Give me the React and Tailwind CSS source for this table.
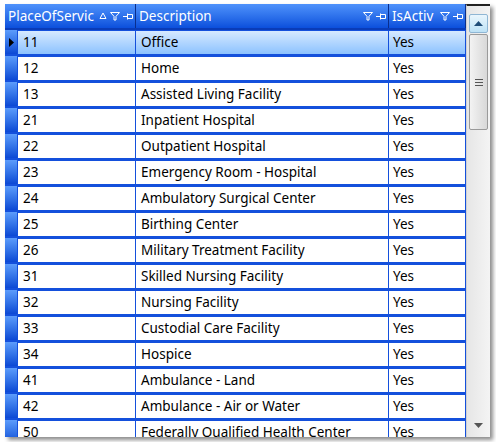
import React from 'react';

const rows = [
  ['11', 'Office', 'Yes'],
  ['12', 'Home', 'Yes'],
  ['13', 'Assisted Living Facility', 'Yes'],
  ['21', 'Inpatient Hospital', 'Yes'],
  ['22', 'Outpatient Hospital', 'Yes'],
  ['23', 'Emergency Room - Hospital', 'Yes'],
  ['24', 'Ambulatory Surgical Center', 'Yes'],
  ['25', 'Birthing Center', 'Yes'],
  ['26', 'Military Treatment Facility', 'Yes'],
  ['31', 'Skilled Nursing Facility', 'Yes'],
  ['32', 'Nursing Facility', 'Yes'],
  ['33', 'Custodial Care Facility', 'Yes'],
  ['34', 'Hospice', 'Yes'],
  ['41', 'Ambulance - Land', 'Yes'],
  ['42', 'Ambulance - Air or Water', 'Yes'],
  ['50', 'Federally Qualified Health Center', 'Yes'],
];

const FilterIcon = () => (
  <svg width="10" height="10" viewBox="0 0 10 10" className="shrink-0">
    <path d="M0.5 1.5 H9.5 L6 5.3 V9 H4 V5.3 Z" fill="none" stroke="white" strokeWidth="1" />
  </svg>
);

const PinIcon = () => (
  <svg width="10" height="10" viewBox="0 0 10 10" className="shrink-0">
    <path d="M0 5.5 H4.5 M4.5 2.5 V8.5 M4.5 3.5 H9.5 V7.5 H4.5" fill="none" stroke="white" strokeWidth="1" />
  </svg>
);

const SortIcon = () => (
  <svg width="8" height="8" viewBox="0 0 8 8" className="shrink-0">
    <path d="M4 1 L7 6.5 H1 Z" fill="none" stroke="white" strokeWidth="1" />
  </svg>
);

const HeaderCell = ({ label, width, sort }) => (
  <div
    className={`${width} h-full flex items-center pl-[3px] pr-[2px] border-r border-[#0a2e8c] overflow-hidden`}
  >
    <span className="flex-1 whitespace-nowrap overflow-hidden text-white text-[13.5px]">{label}</span>
    <div className="flex items-center gap-[3px]">
      {sort && <SortIcon />}
      <FilterIcon />
      <PinIcon />
    </div>
  </div>
);

export default function App() {
  return (
    <div
      className="w-[496px] h-[442px] bg-white pl-[5px] pt-[4px] overflow-hidden"
      style={{ fontFamily: '"Noto Sans", "DejaVu Sans", sans-serif' }}
    >
      <div className="w-[485px] h-[433px] flex shadow-[3px_3px_4px_rgba(0,0,0,0.45)] bg-white">
        <div className="w-[461px] flex flex-col overflow-hidden bg-[#7fb2fb]">
          <div className="h-[26px] flex bg-gradient-to-b from-[#4f92fb] to-[#0b4fdc] border-b-[2px] border-[#0a3cb8] shrink-0">
            <HeaderCell label="PlaceOfServic" width="w-[131px]" sort />
            <HeaderCell label="Description" width="w-[253px]" />
            <HeaderCell label="IsActiv" width="w-[77px]" />
          </div>
          <div className="flex flex-col">
            {rows.map((r, i) => {
              const sel = i === 0;
              return (
                <div key={i} className="h-[26px] flex shrink-0 border-b-[2px] border-[#1450dc]">
                  <div className="w-[12px] h-full bg-gradient-to-b from-[#5c9cfb] to-[#0c48d4] flex items-center justify-center">
                    {sel && (
                      <svg width="5" height="9" viewBox="0 0 5 9">
                        <path d="M0 0 L5 4.5 L0 9 Z" fill="black" />
                      </svg>
                    )}
                  </div>
                  <div
                    className={`flex-1 flex border-l border-t border-[#1450dc] ${
                      sel ? 'bg-gradient-to-b from-[#d6e9ff] to-[#8cc2ff]' : 'bg-white'
                    }`}
                  >
                    <div className="w-[118px] h-full flex items-center pl-[5px] border-r border-[#1450dc] text-[13.5px] text-black">
                      {r[0]}
                    </div>
                    <div className="w-[253px] h-full flex items-center pl-[5px] border-r border-[#1450dc] text-[13.5px] text-black whitespace-nowrap overflow-hidden">
                      {r[1]}
                    </div>
                    <div className="flex-1 h-full flex items-center pl-[4px] border-r border-[#1450dc] text-[13.5px] text-black">
                      {r[2]}
                    </div>
                  </div>
                </div>
              );
            })}
          </div>
        </div>
        <div className="w-[24px] flex flex-col bg-gradient-to-r from-[#e6e6e6] to-[#f4f4f4] border-l border-[#d0d0d0] border-t-[2px] border-t-[#222] pt-[8px] pb-[2px] px-[2px]">
          <div className="h-[19px] rounded-[2px] border border-[#8fb6d4] bg-gradient-to-b from-[#eaf6fd] to-[#bde2f6] flex items-center justify-center shrink-0">
            <svg width="9" height="5" viewBox="0 0 9 5">
              <path d="M0 5 L4.5 0 L9 5 Z" fill="#1f4d78" />
            </svg>
          </div>
          <div className="h-[96px] mt-[1px] rounded-[2px] border border-[#9a9a9a] bg-gradient-to-r from-[#f3f3f3] to-[#d8d8d8] flex flex-col items-center justify-center gap-[2px] shrink-0">
            <div className="w-[8px] h-[1px] bg-[#555]" />
            <div className="w-[8px] h-[1px] bg-[#555]" />
            <div className="w-[8px] h-[1px] bg-[#555]" />
          </div>
          <div className="flex-1" />
          <div className="h-[19px] flex items-center justify-center shrink-0">
            <svg width="9" height="5" viewBox="0 0 9 5">
              <path d="M0 0 L9 0 L4.5 5 Z" fill="#555" />
            </svg>
          </div>
        </div>
      </div>
    </div>
  );
}
